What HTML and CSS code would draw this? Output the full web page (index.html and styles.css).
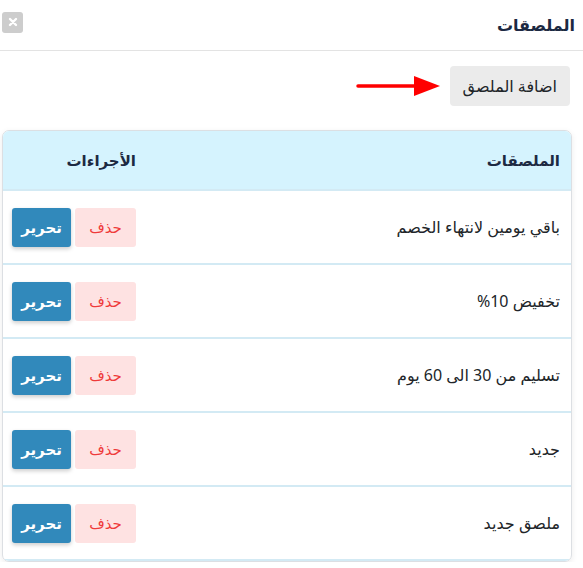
FILE: index.html
```html
<!DOCTYPE html>
<html lang="ar" dir="rtl">
<head>
  <meta charset="UTF-8">
  <meta name="viewport" content="width=device-width, initial-scale=1.0">
  <title>الملصقات</title>
  <link rel="stylesheet" href="styles.css">
</head>
<body>
  <div class="modal">
    <div class="modal-header">
      <h5 class="modal-title">الملصقات</h5>
      <button class="close-btn" aria-label="close">
        <svg width="10" height="10" viewBox="0 0 10 10"><path d="M2 2L8 8M8 2L2 8" stroke="#fff" stroke-width="2.4" stroke-linecap="round"/></svg>
      </button>
    </div>
    <div class="modal-body">
      <div class="toolbar">
        <button class="btn-add">اضافة الملصق</button>
        <svg class="arrow" width="90" height="24" viewBox="0 0 90 24">
          <line x1="2" y1="12" x2="62" y2="12" stroke="#f00" stroke-width="3.5" stroke-linecap="round"/>
          <polygon points="58,2 84,12 58,22" fill="#f00"/>
        </svg>
      </div>
      <div class="card">
        <table class="stickers">
          <thead>
            <tr>
              <th>الملصقات</th>
              <th class="col-actions">الأجراءات</th>
            </tr>
          </thead>
          <tbody>
            <tr>
              <td>باقي يومين لانتهاء الخصم</td>
              <td class="col-actions"><button class="btn-delete">حذف</button><button class="btn-edit">تحرير</button></td>
            </tr>
            <tr>
              <td>تخفيض 10%</td>
              <td class="col-actions"><button class="btn-delete">حذف</button><button class="btn-edit">تحرير</button></td>
            </tr>
            <tr>
              <td>تسليم من 30 الى 60 يوم</td>
              <td class="col-actions"><button class="btn-delete">حذف</button><button class="btn-edit">تحرير</button></td>
            </tr>
            <tr>
              <td>جديد</td>
              <td class="col-actions"><button class="btn-delete">حذف</button><button class="btn-edit">تحرير</button></td>
            </tr>
            <tr>
              <td>ملصق جديد</td>
              <td class="col-actions"><button class="btn-delete">حذف</button><button class="btn-edit">تحرير</button></td>
            </tr>
          </tbody>
        </table>
      </div>
    </div>
  </div>
</body>
</html>
```

FILE: styles.css
```css
body {
  margin: 0;
  background: #fff;
  font-family: "Noto Sans", "DejaVu Sans", sans-serif;
  color: #212529;
  font-size: 16px;
}
.modal {
  width: 583px;
}
.modal-header {
  display: flex;
  align-items: center;
  justify-content: space-between;
  height: 51px;
  padding: 0 14px 0 2px;
  border-bottom: 1px solid #e3e3e3;
  box-sizing: border-box;
}
.modal-title {
  margin: 0 -6px 0 0;
  font-size: 16px;
  font-weight: bold;
  color: #1c2942;
}
.close-btn {
  width: 21px;
  height: 21px;
  margin-top: -6px;
  padding: 0;
  border: none;
  border-radius: 3px;
  background: #cdcdcd;
  display: flex;
  align-items: center;
  justify-content: center;
}
.modal-body {
  padding: 15px 13px 0 11px;
}
.toolbar {
  display: flex;
  align-items: center;
  gap: 4px;
  margin-bottom: 24px;
}
.btn-add {
  height: 40px;
  padding: 0 13px;
  border: none;
  border-radius: 4px;
  background: #ebebeb;
  color: #212529;
  font-family: inherit;
  font-size: 16px;
}
.arrow {
  display: block;
}
.card {
  margin: 0 -2px 0 -9px;
  border: 1px solid #dcdfe3;
  border-radius: 7px;
  overflow: hidden;
  box-shadow: 0 2px 6px rgba(0, 0, 0, 0.08);
}
.stickers {
  width: 100%;
  border-collapse: collapse;
}
.stickers th {
  height: 58px;
  padding: 0 11px;
  background: #d5f3fe;
  text-align: right;
  font-size: 15px;
  font-weight: bold;
  color: #1c2942;
}
.stickers td {
  height: 72px;
  padding: 0 11px;
  border-top: 2px solid #d3eaf4;
  text-align: right;
  color: #212529;
}
.stickers tbody tr:last-child td {
  border-bottom: 2px solid #d3eaf4;
}
.stickers .col-actions {
  width: 124px;
  white-space: nowrap;
  padding-left: 9px;
}
.col-actions button {
  height: 39px;
  border: none;
  border-radius: 3px;
  font-family: inherit;
  font-size: 15px;
  vertical-align: middle;
}
.btn-delete {
  width: 61px;
  margin-left: 4px;
  background: #fee2e2;
  color: #ef3a3a;
}
.btn-edit {
  width: 59px;
  background: #3189bb;
  color: #fff;
  font-weight: bold;
  box-shadow: 0 2px 4px rgba(0, 0, 0, 0.2);
}
```
